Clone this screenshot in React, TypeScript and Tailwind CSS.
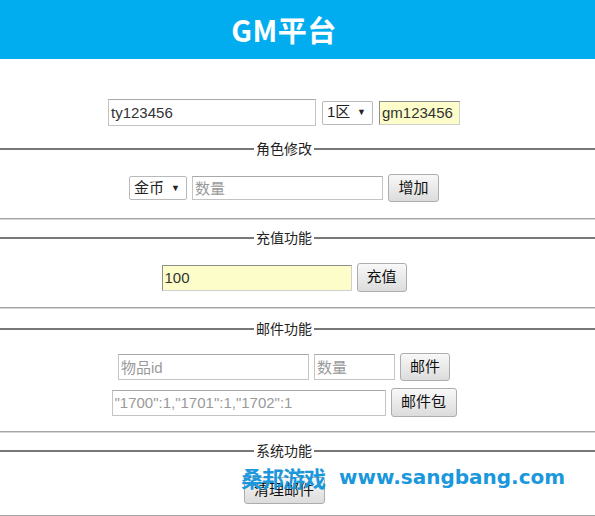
import React from 'react';

const font = { fontFamily: '"Liberation Sans", "Noto Sans CJK SC", sans-serif' };

const Legend = ({ label, className = '' }: { label: string; className?: string }) => (
  <div className={`flex items-center h-[14px] ${className}`}>
    <div className="flex-1 h-[2px] bg-[#777]" />
    <span className="px-[2px] text-[14px] leading-[14px] text-[#222]">{label}</span>
    <div className="flex-1 h-[2px] bg-[#777]" />
    <div className="w-[27px] h-[2px] bg-[#777]" />
  </div>
);

const Rule = ({ className = '' }: { className?: string }) => (
  <div className={`h-[2px] bg-[#a4a4a4] border-b border-[#d6d6d6] ${className}`} />
);

const Field = ({
  w,
  value,
  placeholder,
  yellow,
  h = 'h-[26px]',
}: {
  w: string;
  value?: string;
  placeholder?: string;
  yellow?: boolean;
  h?: string;
}) => (
  <input
    readOnly
    value={value ?? ''}
    placeholder={placeholder}
    className={`${w} ${h} px-[2px] text-[15px] text-[#333] placeholder:text-[#9a9a9a] outline-none border ${
      yellow
        ? 'bg-[#fdfdc9] border-[#cfcfcf] border-t-[#8e8e8e] border-l-[#8e8e8e]'
        : 'bg-white border-[#c4c4c4] border-t-[#a9a9a9]'
    }`}
  />
);

const Btn = ({ w, label, h = 'h-[28px]' }: { w: string; label: string; h?: string }) => (
  <button
    className={`${w} ${h} border border-[#adadad] rounded-[3px] bg-linear-to-b from-[#f8f8f8] to-[#dcdcdc] text-[15px] text-[#111]`}
  >
    {label}
  </button>
);

const Select = ({ w, label }: { w: string; label: string }) => (
  <div
    className={`${w} h-[24px] flex items-center justify-between pl-[4px] pr-[6px] bg-white border border-[#b9b9b9] rounded-[2px] text-[15px] text-[#222]`}
  >
    <span>{label}</span>
    <span className="text-[9px] leading-none">▼</span>
  </div>
);

const Row = ({ children, className = '' }: { children: React.ReactNode; className?: string }) => (
  <div className={`flex justify-center items-center pr-[27px] ${className}`}>{children}</div>
);

export default function App() {
  return (
    <div className="relative w-[595px] h-[516px] overflow-hidden bg-white" style={font}>
      <header className="h-[59px] bg-[#02adef] flex items-center justify-center pr-[27px]">
        <h1
          className="text-[29px] font-bold text-white tracking-[0.5px]"
          style={{ fontFamily: '"Noto Sans CJK SC", "Open Sans", sans-serif' }}
        >
          GM平台
        </h1>
      </header>

      <Row className="mt-[40px] gap-[6px]">
        <Field w="w-[208px]" h="h-[27px]" value="ty123456" />
        <Select w="w-[51px]" label="1区" />
        <Field w="w-[81px]" h="h-[24px]" value="gm123456" yellow />
      </Row>

      <Legend label="角色修改" className="mt-[16px]" />

      <Row className="mt-[18px] gap-[5px]">
        <Select w="w-[58px]" label="金币" />
        <Field w="w-[191px]" h="h-[24px]" placeholder="数量" />
        <Btn w="w-[51px]" label="增加" />
      </Row>

      <Rule className="mt-[16px]" />
      <Legend label="充值功能" className="mt-[11px]" />

      <Row className="mt-[18px] gap-[5px]">
        <Field w="w-[190px]" value="100" yellow />
        <Btn w="w-[50px]" h="h-[29px]" label="充值" />
      </Row>

      <Rule className="mt-[15px]" />
      <Legend label="邮件功能" className="mt-[13px]" />

      <Row className="mt-[17px] gap-[5px]">
        <Field w="w-[191px]" placeholder="物品id" />
        <Field w="w-[81px]" placeholder="数量" />
        <Btn w="w-[50px]" label="邮件" />
      </Row>
      <Row className="mt-[7px] gap-[5px]">
        <Field w="w-[274px]" placeholder={'"1700":1,"1701":1,"1702":1'} />
        <Btn w="w-[66px]" h="h-[29px]" label="邮件包" />
      </Row>

      <Rule className="mt-[14px]" />
      <Legend label="系统功能" className="mt-[11px]" />

      <Row className="mt-[19px]">
        <Btn w="w-[81px]" h="h-[27px]" label="清理邮件" />
      </Row>

      <Rule className="mt-[11px]" />

      {/* watermark overlay */}
      <div
        className="absolute left-[241px] top-[463px] flex items-center gap-[14px] text-[#1b97dc] font-bold"
        style={{ fontFamily: '"Noto Sans CJK SC", "DejaVu Sans", sans-serif' }}
      >
        <span className="text-[22px] leading-[28px] tracking-[-1px]">桑邦游戏</span>
        <span
          className="text-[20px] leading-[28px]"
          style={{ fontFamily: '"DejaVu Sans", sans-serif' }}
        >
          www.sangbang.com
        </span>
      </div>
    </div>
  );
}
